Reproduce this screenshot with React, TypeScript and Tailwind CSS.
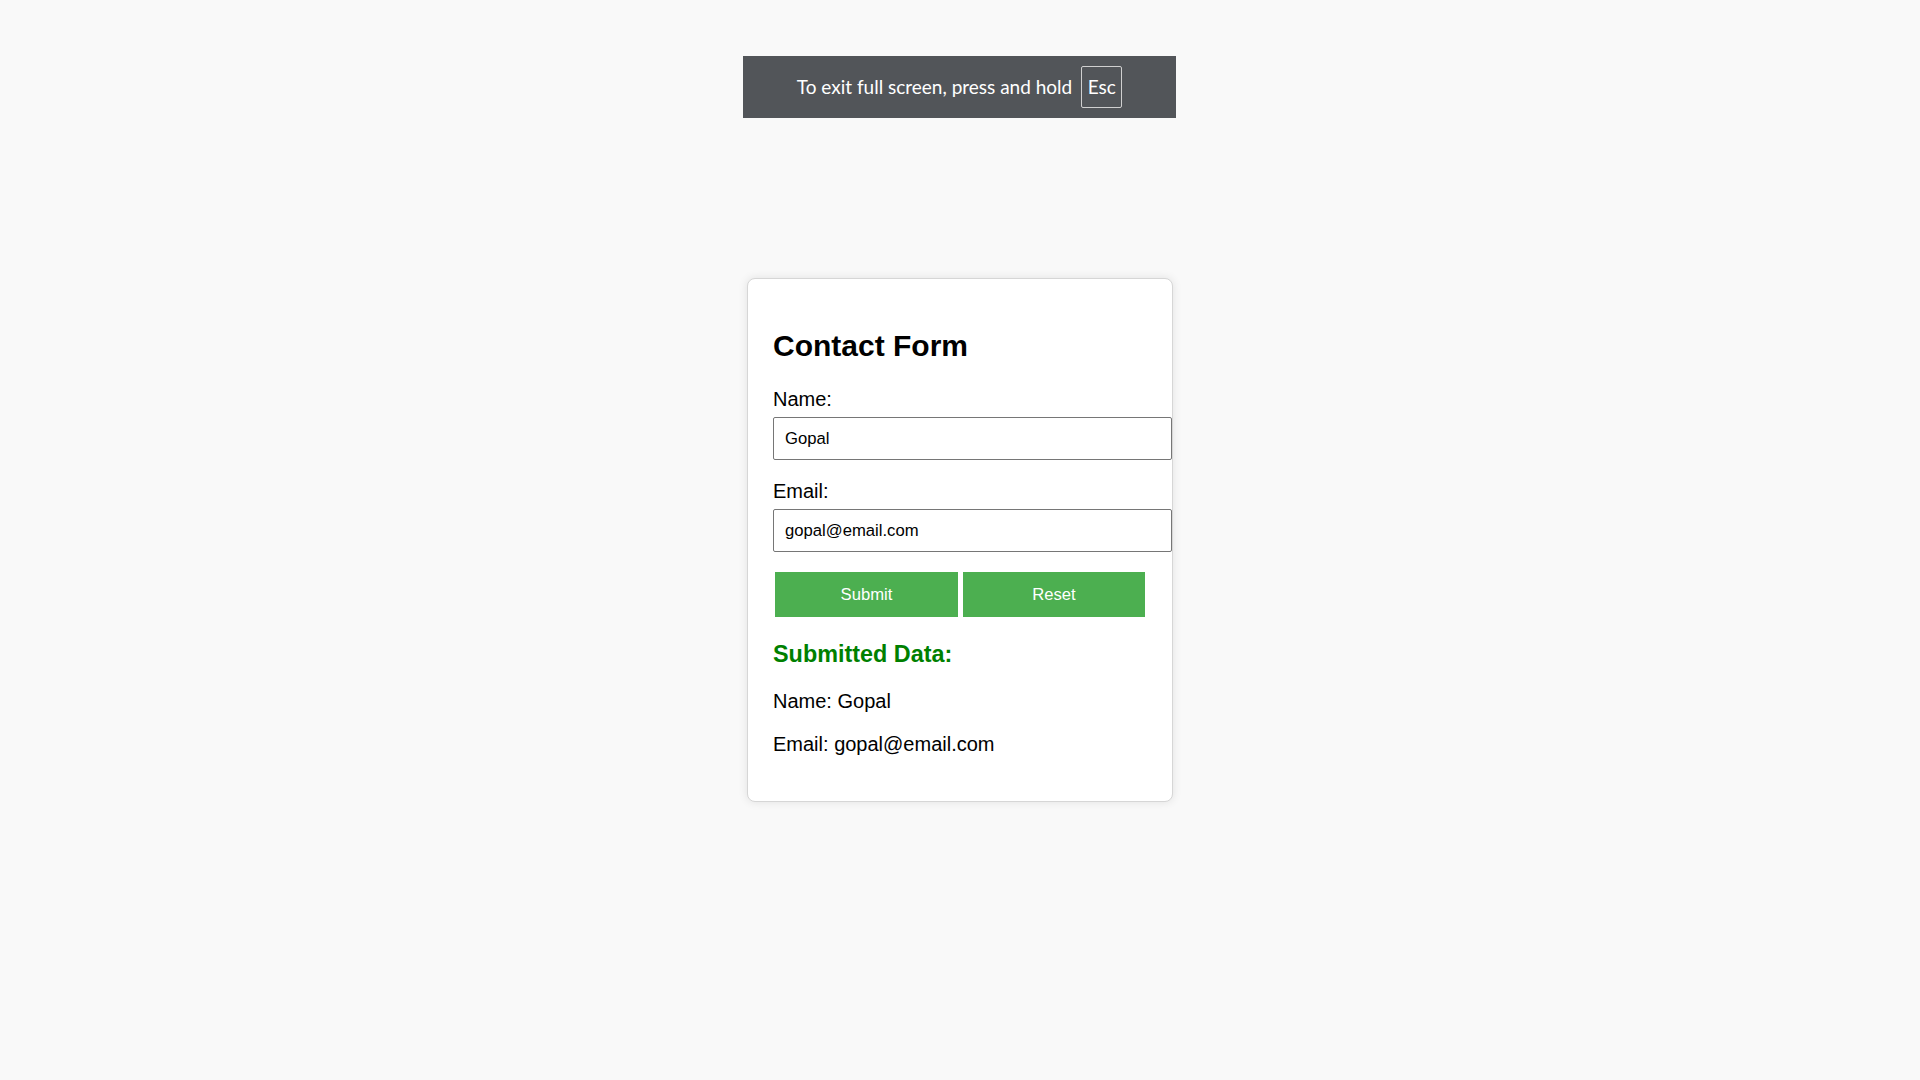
import { useState } from "react";

export default function App() {
  const [name, setName] = useState("Gopal");
  const [email, setEmail] = useState("gopal@email.com");
  const [submitted, setSubmitted] = useState({ name: "Gopal", email: "gopal@email.com" });

  const handleSubmit = (e: React.FormEvent) => {
    e.preventDefault();
    setSubmitted({ name, email });
  };

  const handleReset = () => {
    setName("");
    setEmail("");
  };

  return (
    <div className="relative min-h-screen flex items-center justify-center bg-[#f9f9f9] font-['Liberation_Sans',Arial,sans-serif] text-black">
      {/* fullscreen notice overlay */}
      <div className="absolute left-[743px] top-[56px] w-[433px] h-[62px] bg-[#525559] flex items-center justify-center gap-[9px] text-white font-['Lato',sans-serif] text-[19px]">
        <span>To exit full screen, press and hold</span>
        <span className="w-[41px] h-[42px] border border-[#d0d0d0] rounded-[2px] flex items-center justify-center">Esc</span>
      </div>

      <div className="w-[426px] bg-white border border-[#d6d6d6] rounded-[8px] shadow-[0_0_10px_rgba(0,0,0,0.1)] p-[25px]">
        <h2 className="mt-[24px] mb-[25px] text-[30px] leading-[35px] font-bold">Contact Form</h2>
        <form onSubmit={handleSubmit}>
          <div>
            <label className="block text-[20px] leading-[23px]">Name:</label>
            <input
              type="text"
              value={name}
              onChange={(e) => setName(e.target.value)}
              className="mt-[6px] block w-[399px] h-[43px] px-[11px] text-[16.67px] border border-[#767676] rounded-[2px] bg-white outline-none"
            />
          </div>
          <div className="mt-[20px]">
            <label className="block text-[20px] leading-[23px]">Email:</label>
            <input
              type="email"
              value={email}
              onChange={(e) => setEmail(e.target.value)}
              className="mt-[6px] block w-[399px] h-[43px] px-[11px] text-[16.67px] border border-[#767676] rounded-[2px] bg-white outline-none"
            />
          </div>
          <div className="mt-[20px] pl-[2px] flex gap-[5px]">
            <button type="submit" className="w-[183px] h-[45px] bg-[#4caf50] text-white text-[16.67px]">
              Submit
            </button>
            <button type="button" onClick={handleReset} className="w-[182px] h-[45px] bg-[#4caf50] text-white text-[16.67px]">
              Reset
            </button>
          </div>
        </form>

        <h3 className="mt-[24px] text-[23.4px] leading-[27px] font-bold text-[#008000]">Submitted Data:</h3>
        <p className="mt-[21.5px] text-[20px] leading-[23px]">Name: {submitted.name}</p>
        <p className="mt-[20px] mb-[20px] text-[20px] leading-[23px]">Email: {submitted.email}</p>
      </div>
    </div>
  );
}
